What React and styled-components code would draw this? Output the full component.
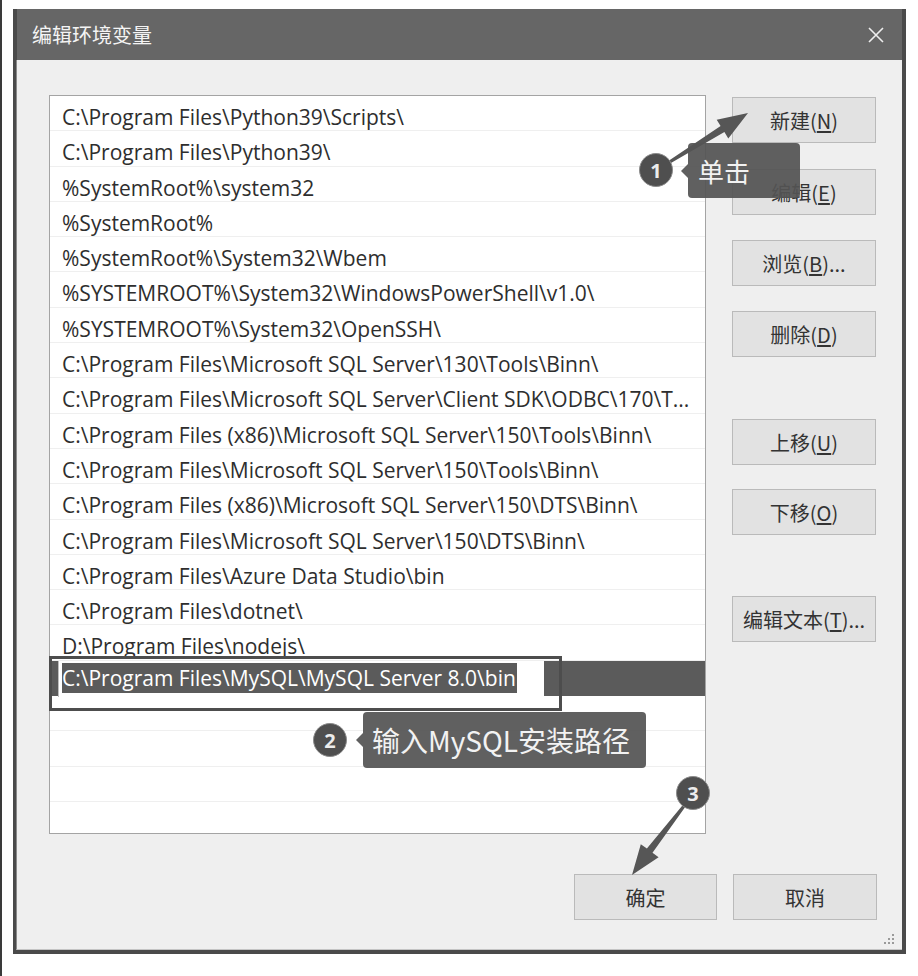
import React from 'react';
import styled, { createGlobalStyle } from 'styled-components';

const GlobalStyle = createGlobalStyle`
  html, body { margin: 0; padding: 0; background: #ffffff; }
  body { font-family: "Open Sans", "Noto Sans CJK SC", sans-serif; }
  #root { width: 918px; height: 976px; }
`;

const Page = styled.div`
  position: relative;
  width: 918px;
  height: 976px;
  display: flex;
  align-items: flex-start;
  background: #ffffff;
  overflow: hidden;
`;

const Edge = styled.div`
  width: 2px;
  height: 976px;
  background: #3a3a3a;
  flex: none;
`;

const Dialog = styled.div`
  position: relative;
  margin: 9px 0 0 11px;
  width: 893px;
  height: 945px;
  box-sizing: border-box;
  border: 4px solid #4a4a4a;
  border-top: none;
  display: flex;
  flex-direction: column;
  background: #efefef;
`;

const TitleBar = styled.div`
  height: 51px;
  flex: none;
  background: #666666;
  display: flex;
  align-items: center;
  justify-content: space-between;
  padding: 0 17px 0 15px;
  color: #f4f4f4;
  font-family: "Noto Sans CJK SC", sans-serif;
  font-size: 20px;
`;

const Title = styled.span`
  letter-spacing: 0;
`;

const Client = styled.div`
  flex: 1;
  display: flex;
  flex-direction: column;
  padding: 35px 25px 0 32px;
  background: #efefef;
  border-left: 1px solid #8a8a8a;
  border-bottom: 1px solid #c4c4c4;
  margin-left: -1px;
`;

const Main = styled.div`
  display: flex;
  gap: 26px;
  height: 739px;
`;

const ListBox = styled.div`
  width: 657px;
  height: 739px;
  box-sizing: border-box;
  border: 1px solid #a4a4a4;
  background: #ffffff;
  overflow: hidden;
`;

const Row = styled.div`
  height: 35.3px;
  box-sizing: border-box;
  border-bottom: 1px solid #efefef;
  padding: 6px 0 0 12px;
  line-height: 30px;
  font-size: 21px;
  color: #2e2e2e;
  white-space: nowrap;
  overflow: hidden;
  background: ${p => (p.$selected ? '#5b5b5b' : '#ffffff')};
`;

const EditRow = styled.div`
  height: 35.3px;
  box-sizing: border-box;
  padding-left: 8px;
  background: #5b5b5b;
  display: flex;
`;

const EditBox = styled.div`
  width: 486px;
  height: 36px;
  box-sizing: border-box;
  background: #ffffff;
  border-left: 1px solid #bdbdbd;
  padding: 2px 0 0 3px;
  font-size: 21px;
  white-space: nowrap;
`;

const Highlight = styled.span`
  display: inline-block;
  background: #5b5b5b;
  color: #ffffff;
  height: 30px;
  line-height: 30px;
  padding-right: 1px;
`;

const SideButtons = styled.div`
  width: 144px;
  display: flex;
  flex-direction: column;
`;

const Button = styled.div`
  width: ${p => p.$w || 144}px;
  height: 46px;
  margin-top: ${p => p.$top || 0}px;
  box-sizing: border-box;
  border: 1px solid #bababa;
  background: #e2e2e2;
  display: flex;
  align-items: center;
  justify-content: center;
  font-family: "Noto Sans CJK SC", sans-serif;
  font-size: 20px;
  color: #333333;
  flex: none;

  u {
    text-decoration: underline;
    text-underline-offset: 2px;
  }
`;

const Footer = styled.div`
  display: flex;
  justify-content: flex-end;
  gap: 16px;
  margin-top: 40px;
`;

const Grip = styled.svg`
  position: absolute;
  right: 6px;
  bottom: 4px;
`;

const Overlay = styled.svg`
  position: absolute;
  left: 0;
  top: 0;
  pointer-events: none;
`;

const Badge = styled.div`
  position: absolute;
  left: ${p => p.$x - 17}px;
  top: ${p => p.$y - 17}px;
  width: 34px;
  height: 34px;
  box-sizing: border-box;
  border-radius: 50%;
  background: #4f4f4f;
  border: 1px solid #8c8c8c;
  color: #ececec;
  font-family: "Noto Sans", sans-serif;
  font-weight: 700;
  font-size: 20px;
  display: flex;
  align-items: center;
  justify-content: center;
`;

const Callout = styled.div`
  position: absolute;
  left: ${p => p.$x}px;
  top: ${p => p.$y}px;
  width: ${p => p.$w}px;
  height: ${p => p.$h}px;
  box-sizing: border-box;
  padding-left: ${p => p.$pad}px;
  border-radius: 4px;
  background: rgba(84, 84, 84, 0.93);
  color: #f2f2f2;
  font-family: "Noto Sans CJK SC", sans-serif;
  font-size: ${p => p.$size}px;
  display: flex;
  align-items: center;
  white-space: nowrap;

  &::before {
    content: '';
    position: absolute;
    left: -7px;
    top: 50%;
    margin-top: -7px;
    border-style: solid;
    border-width: 7px 7px 7px 0;
    border-color: transparent rgba(84, 84, 84, 0.93) transparent transparent;
  }
`;

const Frame = styled.div`
  position: absolute;
  left: 49px;
  top: 656px;
  width: 513px;
  height: 55px;
  box-sizing: border-box;
  border: 3px solid #4d4d4d;
`;

const paths = [
  'C:\\Program Files\\Python39\\Scripts\\',
  'C:\\Program Files\\Python39\\',
  '%SystemRoot%\\system32',
  '%SystemRoot%',
  '%SystemRoot%\\System32\\Wbem',
  '%SYSTEMROOT%\\System32\\WindowsPowerShell\\v1.0\\',
  '%SYSTEMROOT%\\System32\\OpenSSH\\',
  'C:\\Program Files\\Microsoft SQL Server\\130\\Tools\\Binn\\',
  'C:\\Program Files\\Microsoft SQL Server\\Client SDK\\ODBC\\170\\T...',
  'C:\\Program Files (x86)\\Microsoft SQL Server\\150\\Tools\\Binn\\',
  'C:\\Program Files\\Microsoft SQL Server\\150\\Tools\\Binn\\',
  'C:\\Program Files (x86)\\Microsoft SQL Server\\150\\DTS\\Binn\\',
  'C:\\Program Files\\Microsoft SQL Server\\150\\DTS\\Binn\\',
  'C:\\Program Files\\Azure Data Studio\\bin',
  'C:\\Program Files\\dotnet\\',
  'D:\\Program Files\\nodejs\\',
];

const sideButtons = [
  { label: '新建', key: 'N', top: 2 },
  { label: '编辑', key: 'E', top: 26 },
  { label: '浏览', key: 'B', top: 25, dots: true },
  { label: '删除', key: 'D', top: 25 },
  { label: '上移', key: 'U', top: 62 },
  { label: '下移', key: 'O', top: 24 },
  { label: '编辑文本', key: 'T', top: 61, dots: true },
];

function CloseIcon() {
  return (
    <svg width="18" height="18" viewBox="0 0 18 18">
      <path d="M2 2 L16 16 M16 2 L2 16" stroke="#eeeeee" strokeWidth="1.6" fill="none" />
    </svg>
  );
}

export default function App() {
  return (
    <Page>
      <GlobalStyle />
      <Edge />
      <Dialog>
        <TitleBar>
          <Title>编辑环境变量</Title>
          <CloseIcon />
        </TitleBar>
        <Client>
          <Main>
            <ListBox>
              {paths.map(p => (
                <Row key={p}>{p}</Row>
              ))}
              <EditRow>
                <EditBox>
                  <Highlight>C:\Program Files\MySQL\MySQL Server 8.0\bin</Highlight>
                </EditBox>
              </EditRow>
              {[0, 1, 2, 3].map(i => (
                <Row key={'e' + i} />
              ))}
            </ListBox>
            <SideButtons>
              {sideButtons.map(b => (
                <Button key={b.key} $top={b.top}>
                  {b.label}(<u>{b.key}</u>){b.dots ? '...' : ''}
                </Button>
              ))}
            </SideButtons>
          </Main>
          <Footer>
            <Button $w={143}>确定</Button>
            <Button>取消</Button>
          </Footer>
        </Client>
        <Grip width="14" height="14" viewBox="0 0 14 14">
          <g fill="#9a9a9a">
            <rect x="10" y="2" width="2" height="2" />
            <rect x="6" y="6" width="2" height="2" />
            <rect x="10" y="6" width="2" height="2" />
            <rect x="2" y="10" width="2" height="2" />
            <rect x="6" y="10" width="2" height="2" />
            <rect x="10" y="10" width="2" height="2" />
          </g>
        </Grip>
      </Dialog>

      <Frame />
      <Overlay width="918" height="976" viewBox="0 0 918 976">
        <polygon
          points="667.2,161.7 720.6,126 716.7,119.7 748,113 728.3,138.4 724.4,132 668.8,164.3"
          fill="#565656"
        />
        <polygon
          points="682.8,805.1 646.9,848.6 640.8,844.2 632,875 658.6,857.2 652.5,852.8 685.2,806.9"
          fill="#565656"
        />
      </Overlay>
      <Badge $x={656} $y={170}>1</Badge>
      <Badge $x={330} $y={740}>2</Badge>
      <Badge $x={693} $y={793}>3</Badge>
      <Callout $x={688} $y={143} $w={112} $h={55} $pad={10} $size={26}>单击</Callout>
      <Callout $x={363} $y={712} $w={283} $h={56} $pad={9} $size={28}>输入MySQL安装路径</Callout>
    </Page>
  );
}
